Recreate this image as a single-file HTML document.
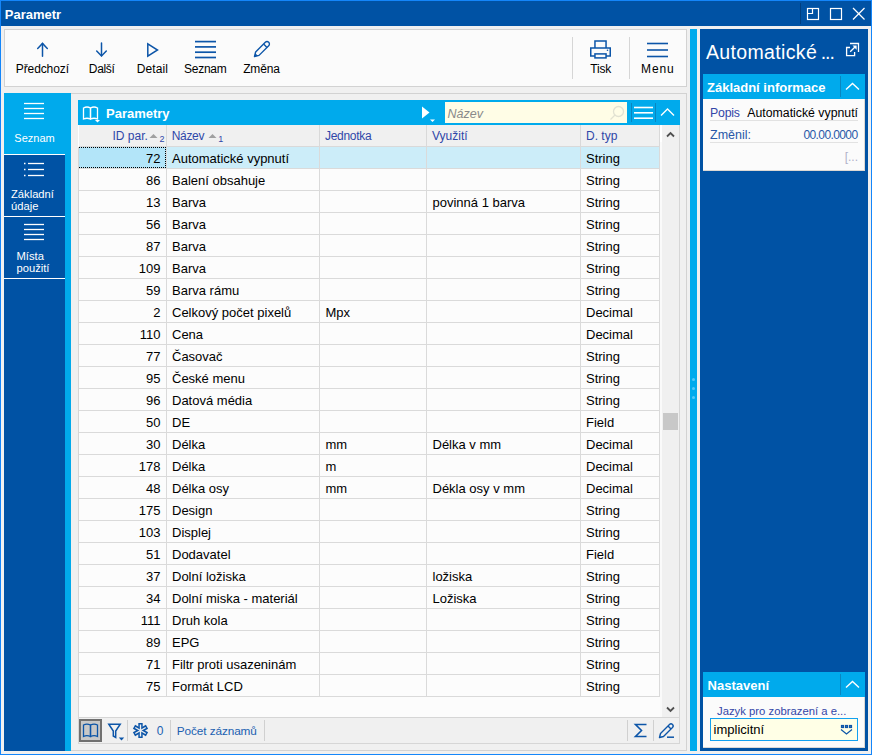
<!DOCTYPE html>
<html><head><meta charset="utf-8"><title>Parametr</title>
<style>
html,body{margin:0;padding:0;width:872px;height:755px;overflow:hidden;background:#f0f0f0;font-family:"Liberation Sans", sans-serif;}
div{font-family:"Liberation Sans", sans-serif;}
</style></head><body>
<div style="position:absolute;left:0px;top:0px;width:872px;height:755px;background:#f0f0f0"></div><div style="position:absolute;left:1px;top:1px;width:870px;height:25px;background:#0052a4"></div><svg style="position:absolute;left:800px;top:3px" width="72" height="22" viewBox="0 0 72 22"><line x1="0.5" y1="0" x2="0.5" y2="21" stroke="#003f80" stroke-width="1"/><g fill="none" stroke="#fff" stroke-width="1.2"><rect x="7.5" y="5.5" width="11" height="11"/><polyline points="12.5,5.5 12.5,10.5 7.5,10.5"/><rect x="30.5" y="5.5" width="11" height="11"/><line x1="53" y1="5" x2="64.5" y2="16.5"/><line x1="64.5" y1="5" x2="53" y2="16.5"/></g></svg><div style="position:absolute;left:0px;top:0px;width:872px;height:1px;background:#1486fa"></div><div style="position:absolute;left:0px;top:0px;width:1px;height:755px;background:#1486fa"></div><div style="position:absolute;left:871px;top:0px;width:1px;height:755px;background:#1486fa"></div><div style="position:absolute;left:0px;top:754px;width:872px;height:1px;background:#1486fa"></div><div style="position:absolute;left:4px;top:29px;width:683px;height:58px;background:#fbfbfb;border:1px solid #d2d2d2;box-sizing:border-box"></div><svg style="position:absolute;left:36px;top:41px" width="13" height="17" viewBox="0 0 13 17"><g fill="none" stroke="#0c55a8" stroke-width="1.5" stroke-linecap="round" stroke-linejoin="miter"><line x1="6.5" y1="2.5" x2="6.5" y2="15.2"/><polyline points="1.7,7.4 6.5,2.4 11.3,7.4"/></g></svg><svg style="position:absolute;left:95px;top:41px" width="13" height="17" viewBox="0 0 13 17"><g fill="none" stroke="#0c55a8" stroke-width="1.5" stroke-linecap="round" stroke-linejoin="miter"><line x1="6.5" y1="1.9" x2="6.5" y2="14.8"/><polyline points="1.7,10 6.5,14.9 11.3,10"/></g></svg><svg style="position:absolute;left:146px;top:42px" width="13" height="16" viewBox="0 0 13 16"><polygon points="1.8,1.8 1.8,14.2 11.5,8" fill="none" stroke="#0c55a8" stroke-width="1.5" stroke-linejoin="miter"/></svg><svg style="position:absolute;left:194px;top:40px" width="23" height="19" viewBox="0 0 23 19"><g stroke="#0c55a8" stroke-width="1.7"><line x1="1" y1="1.6" x2="22" y2="1.6"/><line x1="1" y1="6.9" x2="22" y2="6.9"/><line x1="1" y1="12.2" x2="22" y2="12.2"/><line x1="1" y1="17.5" x2="22" y2="17.5"/></g></svg><svg style="position:absolute;left:252px;top:40px" width="20" height="19" viewBox="0 0 20 19"><g fill="none" stroke="#0c55a8" stroke-width="1.4" stroke-linejoin="round"><path d="M2.5,16.5 L3.63,11.97 L13.3,2.3 A2.4,2.4 0 0 1 16.7,5.7 L7.03,15.37 Z"/><line x1="11.6" y1="4.0" x2="15" y2="7.4"/></g><polygon points="2.5,16.5 3.3,13.2 5.8,15.7" fill="#0c55a8"/></svg><div style="position:absolute;left:572px;top:37px;width:1px;height:42px;background:#d6d6d6"></div><svg style="position:absolute;left:589px;top:39px" width="24" height="21" viewBox="0 0 24 21"><g fill="none" stroke="#0c55a8" stroke-width="1.5"><path d="M5.95,9 V2.1 H17.05 V9"/><path d="M5.95,17 H1.75 V9 H21.25 V17 H17.05"/><rect x="5.95" y="14.9" width="11.1" height="4"/></g><circle cx="18.5" cy="11.3" r="0.8" fill="#0c55a8"/></svg><div style="position:absolute;left:629px;top:37px;width:1px;height:42px;background:#d6d6d6"></div><svg style="position:absolute;left:646px;top:42px" width="23" height="16" viewBox="0 0 23 16"><g stroke="#0c55a8" stroke-width="1.6"><line x1="1" y1="1.5" x2="22" y2="1.5"/><line x1="1" y1="8" x2="22" y2="8"/><line x1="1" y1="14.5" x2="22" y2="14.5"/></g></svg><div style="position:absolute;left:71px;top:93px;width:616px;height:658px;background:#f0f0f0;border-top:1px solid #d2d2d2;border-right:1px solid #d2d2d2;border-bottom:1px solid #d2d2d2;box-sizing:border-box"></div><div style="position:absolute;left:4px;top:93px;width:67px;height:658px;background:#00aaec"></div><div style="position:absolute;left:4px;top:154px;width:61px;height:597px;background:#0052a4"></div><div style="position:absolute;left:4px;top:154px;width:61px;height:1px;background:#ffffff"></div><div style="position:absolute;left:4px;top:216px;width:61px;height:1px;background:#ffffff"></div><div style="position:absolute;left:4px;top:278px;width:61px;height:1px;background:#ffffff"></div><svg style="position:absolute;left:23px;top:102px" width="22" height="18" viewBox="0 0 22 18"><g stroke="#fff" stroke-width="1.3"><line x1="1" y1="1.5" x2="21" y2="1.5"/><line x1="1" y1="6.5" x2="21" y2="6.5"/><line x1="1" y1="11.5" x2="21" y2="11.5"/><line x1="1" y1="16.5" x2="21" y2="16.5"/></g></svg><svg style="position:absolute;left:23px;top:162px" width="22" height="16" viewBox="0 0 22 16"><g stroke="#fff" stroke-width="1.3"><line x1="5" y1="1.5" x2="21" y2="1.5"/><line x1="5" y1="7.5" x2="21" y2="7.5"/><line x1="5" y1="13.5" x2="21" y2="13.5"/><line x1="1" y1="1.5" x2="2.5" y2="1.5"/><line x1="1" y1="7.5" x2="2.5" y2="7.5"/><line x1="1" y1="13.5" x2="2.5" y2="13.5"/></g></svg><svg style="position:absolute;left:23px;top:223px" width="22" height="18" viewBox="0 0 22 18"><g stroke="#fff" stroke-width="1.3"><line x1="1" y1="1.5" x2="21" y2="1.5"/><line x1="1" y1="6.5" x2="21" y2="6.5"/><line x1="1" y1="11.5" x2="21" y2="11.5"/><line x1="1" y1="16.5" x2="21" y2="16.5"/></g></svg><div style="position:absolute;left:78px;top:100px;width:602px;height:25px;background:#00aaec"></div><svg style="position:absolute;left:82px;top:105px" width="20" height="18" viewBox="0 0 20 18"><g fill="none" stroke="#fff" stroke-width="1.3"><path d="M1.5,3 Q5,1 8.5,3 V14 Q5,12.5 1.5,14 Z"/><path d="M8.5,3 Q12,1 15.5,3 V14 Q12,12.5 8.5,14 Z"/></g><polygon points="13,15 18,15 15.5,17.5" fill="#fff"/></svg><svg style="position:absolute;left:420px;top:105px" width="18" height="19" viewBox="0 0 18 19"><polygon points="2,1.5 2,13.5 9.5,7.5" fill="#fff"/><polygon points="10,14.5 15,14.5 12.5,17" fill="#fff"/></svg><div style="position:absolute;left:445px;top:102px;width:182px;height:21px;background:#fffde6"></div><svg style="position:absolute;left:609px;top:105px" width="16" height="16" viewBox="0 0 16 16"><g fill="none" stroke="#e2e2d2" stroke-width="1.3"><circle cx="9.5" cy="6.5" r="5"/><line x1="6" y1="10" x2="1.5" y2="14.5"/></g></svg><div style="position:absolute;left:631px;top:103px;width:1px;height:19px;background:#0a86c0"></div><svg style="position:absolute;left:633px;top:106px" width="22" height="14" viewBox="0 0 22 14"><g stroke="#fff" stroke-width="1.6"><line x1="1" y1="1.5" x2="20" y2="1.5"/><line x1="1" y1="6.8" x2="20" y2="6.8"/><line x1="1" y1="12.2" x2="20" y2="12.2"/></g></svg><div style="position:absolute;left:655px;top:103px;width:1px;height:19px;background:#0a86c0"></div><svg style="position:absolute;left:659px;top:107px" width="18" height="11" viewBox="0 0 18 11"><polyline points="2,8.5 8.5,2 15,8.5" fill="none" stroke="#fff" stroke-width="1.4"/></svg><div style="position:absolute;left:78px;top:125px;width:602px;height:22px;background:#f0f0f0"></div><div style="position:absolute;left:78px;top:146px;width:581px;height:1px;background:#d9d9d9"></div><div style="position:absolute;left:166px;top:125px;width:1px;height:22px;background:#d9d9d9"></div><div style="position:absolute;left:319px;top:125px;width:1px;height:22px;background:#d9d9d9"></div><div style="position:absolute;left:426px;top:125px;width:1px;height:22px;background:#d9d9d9"></div><div style="position:absolute;left:580px;top:125px;width:1px;height:22px;background:#d9d9d9"></div><div style="position:absolute;left:659px;top:125px;width:1px;height:22px;background:#d9d9d9"></div><div style="position:absolute;left:78px;top:125px;width:1px;height:22px;background:#fff"></div><svg style="position:absolute;left:149px;top:133px" width="9" height="6" viewBox="0 0 9 6"><polygon points="0.5,5 4.5,1 8.5,5" fill="#a0a0a0"/></svg><svg style="position:absolute;left:207.5px;top:133px" width="9" height="6" viewBox="0 0 9 6"><polygon points="0.5,5 4.5,1 8.5,5" fill="#a0a0a0"/></svg><svg style="position:absolute;left:665px;top:130px" width="11" height="9" viewBox="0 0 11 9"><polyline points="2,6.5 5.5,3 9,6.5" fill="none" stroke="#505050" stroke-width="1.8"/></svg><div style="position:absolute;left:78px;top:147px;width:584px;height:570px;background:#fcfcfc"></div><div style="position:absolute;left:78px;top:147px;width:88px;height:21px;background:#b3e5f9"></div><div style="position:absolute;left:167px;top:147px;width:492px;height:21px;background:#ccedf9"></div><div style="position:absolute;left:78px;top:147px;width:88px;height:21px;border:1px dotted #000;box-sizing:border-box"></div><div style="position:absolute;left:78px;top:168px;width:581px;height:1px;background:#dadada"></div><div style="position:absolute;left:166px;top:147px;width:1px;height:22px;background:#dadada"></div><div style="position:absolute;left:319px;top:147px;width:1px;height:22px;background:#dadada"></div><div style="position:absolute;left:426px;top:147px;width:1px;height:22px;background:#dadada"></div><div style="position:absolute;left:580px;top:147px;width:1px;height:22px;background:#dadada"></div><div style="position:absolute;left:659px;top:147px;width:1px;height:22px;background:#dadada"></div><div style="position:absolute;left:78px;top:190px;width:581px;height:1px;background:#dadada"></div><div style="position:absolute;left:166px;top:169px;width:1px;height:22px;background:#dadada"></div><div style="position:absolute;left:319px;top:169px;width:1px;height:22px;background:#dadada"></div><div style="position:absolute;left:426px;top:169px;width:1px;height:22px;background:#dadada"></div><div style="position:absolute;left:580px;top:169px;width:1px;height:22px;background:#dadada"></div><div style="position:absolute;left:659px;top:169px;width:1px;height:22px;background:#dadada"></div><div style="position:absolute;left:78px;top:212px;width:581px;height:1px;background:#dadada"></div><div style="position:absolute;left:166px;top:191px;width:1px;height:22px;background:#dadada"></div><div style="position:absolute;left:319px;top:191px;width:1px;height:22px;background:#dadada"></div><div style="position:absolute;left:426px;top:191px;width:1px;height:22px;background:#dadada"></div><div style="position:absolute;left:580px;top:191px;width:1px;height:22px;background:#dadada"></div><div style="position:absolute;left:659px;top:191px;width:1px;height:22px;background:#dadada"></div><div style="position:absolute;left:78px;top:234px;width:581px;height:1px;background:#dadada"></div><div style="position:absolute;left:166px;top:213px;width:1px;height:22px;background:#dadada"></div><div style="position:absolute;left:319px;top:213px;width:1px;height:22px;background:#dadada"></div><div style="position:absolute;left:426px;top:213px;width:1px;height:22px;background:#dadada"></div><div style="position:absolute;left:580px;top:213px;width:1px;height:22px;background:#dadada"></div><div style="position:absolute;left:659px;top:213px;width:1px;height:22px;background:#dadada"></div><div style="position:absolute;left:78px;top:256px;width:581px;height:1px;background:#dadada"></div><div style="position:absolute;left:166px;top:235px;width:1px;height:22px;background:#dadada"></div><div style="position:absolute;left:319px;top:235px;width:1px;height:22px;background:#dadada"></div><div style="position:absolute;left:426px;top:235px;width:1px;height:22px;background:#dadada"></div><div style="position:absolute;left:580px;top:235px;width:1px;height:22px;background:#dadada"></div><div style="position:absolute;left:659px;top:235px;width:1px;height:22px;background:#dadada"></div><div style="position:absolute;left:78px;top:278px;width:581px;height:1px;background:#dadada"></div><div style="position:absolute;left:166px;top:257px;width:1px;height:22px;background:#dadada"></div><div style="position:absolute;left:319px;top:257px;width:1px;height:22px;background:#dadada"></div><div style="position:absolute;left:426px;top:257px;width:1px;height:22px;background:#dadada"></div><div style="position:absolute;left:580px;top:257px;width:1px;height:22px;background:#dadada"></div><div style="position:absolute;left:659px;top:257px;width:1px;height:22px;background:#dadada"></div><div style="position:absolute;left:78px;top:300px;width:581px;height:1px;background:#dadada"></div><div style="position:absolute;left:166px;top:279px;width:1px;height:22px;background:#dadada"></div><div style="position:absolute;left:319px;top:279px;width:1px;height:22px;background:#dadada"></div><div style="position:absolute;left:426px;top:279px;width:1px;height:22px;background:#dadada"></div><div style="position:absolute;left:580px;top:279px;width:1px;height:22px;background:#dadada"></div><div style="position:absolute;left:659px;top:279px;width:1px;height:22px;background:#dadada"></div><div style="position:absolute;left:78px;top:322px;width:581px;height:1px;background:#dadada"></div><div style="position:absolute;left:166px;top:301px;width:1px;height:22px;background:#dadada"></div><div style="position:absolute;left:319px;top:301px;width:1px;height:22px;background:#dadada"></div><div style="position:absolute;left:426px;top:301px;width:1px;height:22px;background:#dadada"></div><div style="position:absolute;left:580px;top:301px;width:1px;height:22px;background:#dadada"></div><div style="position:absolute;left:659px;top:301px;width:1px;height:22px;background:#dadada"></div><div style="position:absolute;left:78px;top:344px;width:581px;height:1px;background:#dadada"></div><div style="position:absolute;left:166px;top:323px;width:1px;height:22px;background:#dadada"></div><div style="position:absolute;left:319px;top:323px;width:1px;height:22px;background:#dadada"></div><div style="position:absolute;left:426px;top:323px;width:1px;height:22px;background:#dadada"></div><div style="position:absolute;left:580px;top:323px;width:1px;height:22px;background:#dadada"></div><div style="position:absolute;left:659px;top:323px;width:1px;height:22px;background:#dadada"></div><div style="position:absolute;left:78px;top:366px;width:581px;height:1px;background:#dadada"></div><div style="position:absolute;left:166px;top:345px;width:1px;height:22px;background:#dadada"></div><div style="position:absolute;left:319px;top:345px;width:1px;height:22px;background:#dadada"></div><div style="position:absolute;left:426px;top:345px;width:1px;height:22px;background:#dadada"></div><div style="position:absolute;left:580px;top:345px;width:1px;height:22px;background:#dadada"></div><div style="position:absolute;left:659px;top:345px;width:1px;height:22px;background:#dadada"></div><div style="position:absolute;left:78px;top:388px;width:581px;height:1px;background:#dadada"></div><div style="position:absolute;left:166px;top:367px;width:1px;height:22px;background:#dadada"></div><div style="position:absolute;left:319px;top:367px;width:1px;height:22px;background:#dadada"></div><div style="position:absolute;left:426px;top:367px;width:1px;height:22px;background:#dadada"></div><div style="position:absolute;left:580px;top:367px;width:1px;height:22px;background:#dadada"></div><div style="position:absolute;left:659px;top:367px;width:1px;height:22px;background:#dadada"></div><div style="position:absolute;left:78px;top:410px;width:581px;height:1px;background:#dadada"></div><div style="position:absolute;left:166px;top:389px;width:1px;height:22px;background:#dadada"></div><div style="position:absolute;left:319px;top:389px;width:1px;height:22px;background:#dadada"></div><div style="position:absolute;left:426px;top:389px;width:1px;height:22px;background:#dadada"></div><div style="position:absolute;left:580px;top:389px;width:1px;height:22px;background:#dadada"></div><div style="position:absolute;left:659px;top:389px;width:1px;height:22px;background:#dadada"></div><div style="position:absolute;left:78px;top:432px;width:581px;height:1px;background:#dadada"></div><div style="position:absolute;left:166px;top:411px;width:1px;height:22px;background:#dadada"></div><div style="position:absolute;left:319px;top:411px;width:1px;height:22px;background:#dadada"></div><div style="position:absolute;left:426px;top:411px;width:1px;height:22px;background:#dadada"></div><div style="position:absolute;left:580px;top:411px;width:1px;height:22px;background:#dadada"></div><div style="position:absolute;left:659px;top:411px;width:1px;height:22px;background:#dadada"></div><div style="position:absolute;left:78px;top:454px;width:581px;height:1px;background:#dadada"></div><div style="position:absolute;left:166px;top:433px;width:1px;height:22px;background:#dadada"></div><div style="position:absolute;left:319px;top:433px;width:1px;height:22px;background:#dadada"></div><div style="position:absolute;left:426px;top:433px;width:1px;height:22px;background:#dadada"></div><div style="position:absolute;left:580px;top:433px;width:1px;height:22px;background:#dadada"></div><div style="position:absolute;left:659px;top:433px;width:1px;height:22px;background:#dadada"></div><div style="position:absolute;left:78px;top:476px;width:581px;height:1px;background:#dadada"></div><div style="position:absolute;left:166px;top:455px;width:1px;height:22px;background:#dadada"></div><div style="position:absolute;left:319px;top:455px;width:1px;height:22px;background:#dadada"></div><div style="position:absolute;left:426px;top:455px;width:1px;height:22px;background:#dadada"></div><div style="position:absolute;left:580px;top:455px;width:1px;height:22px;background:#dadada"></div><div style="position:absolute;left:659px;top:455px;width:1px;height:22px;background:#dadada"></div><div style="position:absolute;left:78px;top:498px;width:581px;height:1px;background:#dadada"></div><div style="position:absolute;left:166px;top:477px;width:1px;height:22px;background:#dadada"></div><div style="position:absolute;left:319px;top:477px;width:1px;height:22px;background:#dadada"></div><div style="position:absolute;left:426px;top:477px;width:1px;height:22px;background:#dadada"></div><div style="position:absolute;left:580px;top:477px;width:1px;height:22px;background:#dadada"></div><div style="position:absolute;left:659px;top:477px;width:1px;height:22px;background:#dadada"></div><div style="position:absolute;left:78px;top:520px;width:581px;height:1px;background:#dadada"></div><div style="position:absolute;left:166px;top:499px;width:1px;height:22px;background:#dadada"></div><div style="position:absolute;left:319px;top:499px;width:1px;height:22px;background:#dadada"></div><div style="position:absolute;left:426px;top:499px;width:1px;height:22px;background:#dadada"></div><div style="position:absolute;left:580px;top:499px;width:1px;height:22px;background:#dadada"></div><div style="position:absolute;left:659px;top:499px;width:1px;height:22px;background:#dadada"></div><div style="position:absolute;left:78px;top:542px;width:581px;height:1px;background:#dadada"></div><div style="position:absolute;left:166px;top:521px;width:1px;height:22px;background:#dadada"></div><div style="position:absolute;left:319px;top:521px;width:1px;height:22px;background:#dadada"></div><div style="position:absolute;left:426px;top:521px;width:1px;height:22px;background:#dadada"></div><div style="position:absolute;left:580px;top:521px;width:1px;height:22px;background:#dadada"></div><div style="position:absolute;left:659px;top:521px;width:1px;height:22px;background:#dadada"></div><div style="position:absolute;left:78px;top:564px;width:581px;height:1px;background:#dadada"></div><div style="position:absolute;left:166px;top:543px;width:1px;height:22px;background:#dadada"></div><div style="position:absolute;left:319px;top:543px;width:1px;height:22px;background:#dadada"></div><div style="position:absolute;left:426px;top:543px;width:1px;height:22px;background:#dadada"></div><div style="position:absolute;left:580px;top:543px;width:1px;height:22px;background:#dadada"></div><div style="position:absolute;left:659px;top:543px;width:1px;height:22px;background:#dadada"></div><div style="position:absolute;left:78px;top:586px;width:581px;height:1px;background:#dadada"></div><div style="position:absolute;left:166px;top:565px;width:1px;height:22px;background:#dadada"></div><div style="position:absolute;left:319px;top:565px;width:1px;height:22px;background:#dadada"></div><div style="position:absolute;left:426px;top:565px;width:1px;height:22px;background:#dadada"></div><div style="position:absolute;left:580px;top:565px;width:1px;height:22px;background:#dadada"></div><div style="position:absolute;left:659px;top:565px;width:1px;height:22px;background:#dadada"></div><div style="position:absolute;left:78px;top:608px;width:581px;height:1px;background:#dadada"></div><div style="position:absolute;left:166px;top:587px;width:1px;height:22px;background:#dadada"></div><div style="position:absolute;left:319px;top:587px;width:1px;height:22px;background:#dadada"></div><div style="position:absolute;left:426px;top:587px;width:1px;height:22px;background:#dadada"></div><div style="position:absolute;left:580px;top:587px;width:1px;height:22px;background:#dadada"></div><div style="position:absolute;left:659px;top:587px;width:1px;height:22px;background:#dadada"></div><div style="position:absolute;left:78px;top:630px;width:581px;height:1px;background:#dadada"></div><div style="position:absolute;left:166px;top:609px;width:1px;height:22px;background:#dadada"></div><div style="position:absolute;left:319px;top:609px;width:1px;height:22px;background:#dadada"></div><div style="position:absolute;left:426px;top:609px;width:1px;height:22px;background:#dadada"></div><div style="position:absolute;left:580px;top:609px;width:1px;height:22px;background:#dadada"></div><div style="position:absolute;left:659px;top:609px;width:1px;height:22px;background:#dadada"></div><div style="position:absolute;left:78px;top:652px;width:581px;height:1px;background:#dadada"></div><div style="position:absolute;left:166px;top:631px;width:1px;height:22px;background:#dadada"></div><div style="position:absolute;left:319px;top:631px;width:1px;height:22px;background:#dadada"></div><div style="position:absolute;left:426px;top:631px;width:1px;height:22px;background:#dadada"></div><div style="position:absolute;left:580px;top:631px;width:1px;height:22px;background:#dadada"></div><div style="position:absolute;left:659px;top:631px;width:1px;height:22px;background:#dadada"></div><div style="position:absolute;left:78px;top:674px;width:581px;height:1px;background:#dadada"></div><div style="position:absolute;left:166px;top:653px;width:1px;height:22px;background:#dadada"></div><div style="position:absolute;left:319px;top:653px;width:1px;height:22px;background:#dadada"></div><div style="position:absolute;left:426px;top:653px;width:1px;height:22px;background:#dadada"></div><div style="position:absolute;left:580px;top:653px;width:1px;height:22px;background:#dadada"></div><div style="position:absolute;left:659px;top:653px;width:1px;height:22px;background:#dadada"></div><div style="position:absolute;left:78px;top:696px;width:581px;height:1px;background:#dadada"></div><div style="position:absolute;left:166px;top:675px;width:1px;height:22px;background:#dadada"></div><div style="position:absolute;left:319px;top:675px;width:1px;height:22px;background:#dadada"></div><div style="position:absolute;left:426px;top:675px;width:1px;height:22px;background:#dadada"></div><div style="position:absolute;left:580px;top:675px;width:1px;height:22px;background:#dadada"></div><div style="position:absolute;left:659px;top:675px;width:1px;height:22px;background:#dadada"></div><div style="position:absolute;left:660px;top:125px;width:2px;height:17px;background:#ffffff"></div><div style="position:absolute;left:660px;top:142px;width:2px;height:575px;background:#fafafa"></div><div style="position:absolute;left:662px;top:147px;width:17px;height:570px;background:#f0f0f0"></div><div style="position:absolute;left:679px;top:125px;width:1px;height:618px;background:#d6d6d6"></div><div style="position:absolute;left:663px;top:413px;width:15px;height:17px;background:#c8c8c8"></div><svg style="position:absolute;left:665px;top:705px" width="11" height="9" viewBox="0 0 11 9"><polyline points="2,2.5 5.5,6 9,2.5" fill="none" stroke="#505050" stroke-width="1.8"/></svg><div style="position:absolute;left:78px;top:717px;width:602px;height:1px;background:#d6d6d6"></div><div style="position:absolute;left:78px;top:743px;width:602px;height:1px;background:#d6d6d6"></div><div style="position:absolute;left:78px;top:147px;width:1px;height:596px;background:#d6d6d6"></div><div style="position:absolute;left:79px;top:719px;width:23px;height:23px;background:#c8c8c8;border:2px solid #707070;box-sizing:border-box"></div><svg style="position:absolute;left:82px;top:722px" width="18" height="17" viewBox="0 0 18 17"><g fill="none" stroke="#0c55a8" stroke-width="1.3"><path d="M1.5,3 Q4.8,1.2 8.5,3 V14.5 Q4.8,12.8 1.5,14.5 Z"/><path d="M8.5,3 Q12.2,1.2 15.5,3 V14.5 Q12.2,12.8 8.5,14.5 Z"/></g></svg><svg style="position:absolute;left:106px;top:721px" width="20" height="21" viewBox="0 0 20 21"><path d="M2.8,3.2 H14.2 L9.7,10 V16.5 L7.3,15 V10 Z" fill="none" stroke="#0c55a8" stroke-width="1.5" stroke-linejoin="miter"/><polygon points="12.8,16.5 18.2,16.5 15.5,19.5" fill="#0c55a8"/></svg><div style="position:absolute;left:127px;top:720px;width:1px;height:21px;background:#d0d0d0"></div><svg style="position:absolute;left:131px;top:721px" width="19" height="19" viewBox="0 0 19 19"><g stroke="#0c55a8" stroke-width="4.4" stroke-linecap="butt"><line x1="9.5" y1="2" x2="9.5" y2="17"/><line x1="3" y1="5.75" x2="16" y2="13.25"/><line x1="3" y1="13.25" x2="16" y2="5.75"/></g><g stroke="#f0f0f0" stroke-width="1.4"><line x1="9.5" y1="3.5" x2="9.5" y2="15.5"/><line x1="4.3" y1="6.5" x2="14.7" y2="12.5"/><line x1="4.3" y1="12.5" x2="14.7" y2="6.5"/></g></svg><div style="position:absolute;left:170px;top:720px;width:1px;height:21px;background:#d0d0d0"></div><div style="position:absolute;left:264px;top:720px;width:1px;height:21px;background:#d0d0d0"></div><div style="position:absolute;left:627px;top:720px;width:1px;height:21px;background:#d0d0d0"></div><svg style="position:absolute;left:633px;top:722px" width="16" height="17" viewBox="0 0 16 17"><polyline points="13.5,2.5 2.5,2.5 8.5,8.5 2.5,14.5 13.5,14.5" fill="none" stroke="#0c55a8" stroke-width="1.6" stroke-linejoin="miter"/></svg><div style="position:absolute;left:653px;top:720px;width:1px;height:21px;background:#d0d0d0"></div><svg style="position:absolute;left:658px;top:722px" width="18" height="17" viewBox="0 0 18 17"><g fill="none" stroke="#0c55a8" stroke-width="1.4" stroke-linejoin="round"><path d="M2.5,11.5 L11.5,2.5 Q13,1 14.5,2.5 Q16,4 14.5,5.5 L5.5,14.5 L1.5,15.5 Z"/><line x1="10" y1="4" x2="13" y2="7"/></g><line x1="9" y1="15.2" x2="16" y2="15.2" stroke="#0c55a8" stroke-width="1.5"/></svg><div style="position:absolute;left:690px;top:29px;width:7px;height:722px;background:#00aaec"></div><div style="position:absolute;left:692px;top:378px;width:3px;height:3px;border-radius:50%;background:#55c8f8"></div><div style="position:absolute;left:692px;top:387px;width:3px;height:3px;border-radius:50%;background:#55c8f8"></div><div style="position:absolute;left:692px;top:396px;width:3px;height:3px;border-radius:50%;background:#55c8f8"></div><div style="position:absolute;left:700px;top:29px;width:168px;height:722px;background:#0052a4"></div><svg style="position:absolute;left:845px;top:42px" width="16" height="16" viewBox="0 0 16 16"><g fill="none" stroke="#fff" stroke-width="1.3"><path d="M5,1.5 H13.5 V10"/><path d="M5,5.5 H1.6 V13.6 H9.6 V10"/><line x1="5.2" y1="9.8" x2="10.5" y2="4.5"/></g><polygon points="7.5,3.6 11.6,3.6 11.6,7.7" fill="#fff"/></svg><div style="position:absolute;left:703px;top:74px;width:162px;height:25px;background:#00aaec"></div><div style="position:absolute;left:840px;top:76px;width:1px;height:21px;background:#0a86c0"></div><svg style="position:absolute;left:844px;top:81px" width="17" height="11" viewBox="0 0 17 11"><polyline points="2,8.5 8.5,2.5 15,8.5" fill="none" stroke="#fff" stroke-width="1.4"/></svg><div style="position:absolute;left:703px;top:99px;width:162px;height:72px;background:#fbfbfb;border-right:1px solid #dcd8d4;border-bottom:1px solid #dcd8d4;box-sizing:border-box"></div><div style="position:absolute;left:710px;top:120px;width:148px;height:1px;background:#e2e2e2"></div><div style="position:absolute;left:710px;top:142px;width:148px;height:1px;background:#e2e2e2"></div><div style="position:absolute;left:703px;top:672px;width:162px;height:25px;background:#00aaec"></div><div style="position:absolute;left:840px;top:674px;width:1px;height:21px;background:#0a86c0"></div><svg style="position:absolute;left:844px;top:679px" width="17" height="11" viewBox="0 0 17 11"><polyline points="2,8.5 8.5,2.5 15,8.5" fill="none" stroke="#fff" stroke-width="1.4"/></svg><div style="position:absolute;left:703px;top:697px;width:162px;height:51px;background:#fbfbfb;border-right:1px solid #dcd8d4;border-bottom:1px solid #dcd8d4;box-sizing:border-box"></div><div style="position:absolute;left:710px;top:718px;width:148px;height:23px;background:#ffffe6;border:1px solid #12a0f0;box-sizing:border-box"></div><svg style="position:absolute;left:839px;top:723px" width="15" height="13" viewBox="0 0 15 13"><g fill="none" stroke="#0c55a8" stroke-width="1.2"><rect x="2.5" y="2.5" width="2" height="2"/><rect x="6.5" y="2.5" width="2" height="2"/><rect x="10.5" y="2.5" width="2" height="2"/><polyline points="2,6.5 7.5,11 13,6.5"/></g></svg>
<svg style="position:absolute;left:0;top:0" width="872" height="755" font-family='"Liberation Sans", sans-serif'><text x="4.8" y="19" font-size="13" fill="#fff" text-anchor="start" font-weight="bold">Parametr</text><text x="42.35" y="73.2" font-size="12" fill="#000" text-anchor="middle" letter-spacing="-0.1">Předchozí</text><text x="101.615" y="73.2" font-size="12" fill="#000" text-anchor="middle" letter-spacing="-0.37">Další</text><text x="152.35000000000002" y="73.2" font-size="12" fill="#000" text-anchor="middle" letter-spacing="0.1">Detail</text><text x="205.27" y="73.2" font-size="12" fill="#000" text-anchor="middle" letter-spacing="-0.26">Seznam</text><text x="261.415" y="73.2" font-size="12" fill="#000" text-anchor="middle" letter-spacing="-0.17">Změna</text><text x="600.7149999999999" y="73.2" font-size="12" fill="#000" text-anchor="middle" letter-spacing="-0.17">Tisk</text><text x="657.85" y="73.2" font-size="12" fill="#000" text-anchor="middle" letter-spacing="0.9">Menu</text><text x="34.5" y="141.6" font-size="11" fill="#fff" text-anchor="middle">Seznam</text><text x="11" y="197.9" font-size="11.2" fill="#fff" text-anchor="start">Základní</text><text x="11" y="210.3" font-size="11.2" fill="#fff" text-anchor="start">údaje</text><text x="16.5" y="259.8" font-size="11.2" fill="#fff" text-anchor="start">Místa</text><text x="16.5" y="272.4" font-size="11.2" fill="#fff" text-anchor="start">použití</text><text x="106" y="118.2" font-size="13" fill="#fff" text-anchor="start" font-weight="bold">Parametry</text><text x="447.5" y="117.7" font-size="12.5" fill="#8a8a8a" text-anchor="start" font-style="italic">Název</text><text x="112.5" y="140" font-size="12" fill="#2f47a8" text-anchor="start">ID par.</text><text x="159.5" y="142" font-size="9" fill="#2f47a8" text-anchor="start">2</text><text x="171.8" y="140" font-size="12" fill="#2f47a8" text-anchor="start" letter-spacing="-0.35">Název</text><text x="218.3" y="142" font-size="9" fill="#2f47a8" text-anchor="start">1</text><text x="325" y="140" font-size="12" fill="#2f47a8" text-anchor="start" letter-spacing="-0.3">Jednotka</text><text x="432" y="140" font-size="12" fill="#2f47a8" text-anchor="start">Využití</text><text x="586" y="140" font-size="12" fill="#2f47a8" text-anchor="start">D. typ</text><text x="160.5" y="163.2" font-size="13" fill="#000" text-anchor="end">72</text><text x="172" y="163.2" font-size="13" fill="#000" text-anchor="start">Automatické vypnutí</text><text x="586" y="163.2" font-size="13" fill="#000" text-anchor="start">String</text><text x="160.5" y="185.2" font-size="13" fill="#000" text-anchor="end">86</text><text x="172" y="185.2" font-size="13" fill="#000" text-anchor="start">Balení obsahuje</text><text x="586" y="185.2" font-size="13" fill="#000" text-anchor="start">String</text><text x="160.5" y="207.2" font-size="13" fill="#000" text-anchor="end">13</text><text x="172" y="207.2" font-size="13" fill="#000" text-anchor="start">Barva</text><text x="432.5" y="207.2" font-size="13" fill="#000" text-anchor="start">povinná 1 barva</text><text x="586" y="207.2" font-size="13" fill="#000" text-anchor="start">String</text><text x="160.5" y="229.2" font-size="13" fill="#000" text-anchor="end">56</text><text x="172" y="229.2" font-size="13" fill="#000" text-anchor="start">Barva</text><text x="586" y="229.2" font-size="13" fill="#000" text-anchor="start">String</text><text x="160.5" y="251.2" font-size="13" fill="#000" text-anchor="end">87</text><text x="172" y="251.2" font-size="13" fill="#000" text-anchor="start">Barva</text><text x="586" y="251.2" font-size="13" fill="#000" text-anchor="start">String</text><text x="160.5" y="273.2" font-size="13" fill="#000" text-anchor="end">109</text><text x="172" y="273.2" font-size="13" fill="#000" text-anchor="start">Barva</text><text x="586" y="273.2" font-size="13" fill="#000" text-anchor="start">String</text><text x="160.5" y="295.2" font-size="13" fill="#000" text-anchor="end">59</text><text x="172" y="295.2" font-size="13" fill="#000" text-anchor="start">Barva rámu</text><text x="586" y="295.2" font-size="13" fill="#000" text-anchor="start">String</text><text x="160.5" y="317.2" font-size="13" fill="#000" text-anchor="end">2</text><text x="172" y="317.2" font-size="13" fill="#000" text-anchor="start">Celkový počet pixelů</text><text x="325.5" y="317.2" font-size="13" fill="#000" text-anchor="start">Mpx</text><text x="586" y="317.2" font-size="13" fill="#000" text-anchor="start">Decimal</text><text x="160.5" y="339.2" font-size="13" fill="#000" text-anchor="end">110</text><text x="172" y="339.2" font-size="13" fill="#000" text-anchor="start">Cena</text><text x="586" y="339.2" font-size="13" fill="#000" text-anchor="start">Decimal</text><text x="160.5" y="361.2" font-size="13" fill="#000" text-anchor="end">77</text><text x="172" y="361.2" font-size="13" fill="#000" text-anchor="start">Časovač</text><text x="586" y="361.2" font-size="13" fill="#000" text-anchor="start">String</text><text x="160.5" y="383.2" font-size="13" fill="#000" text-anchor="end">95</text><text x="172" y="383.2" font-size="13" fill="#000" text-anchor="start">České menu</text><text x="586" y="383.2" font-size="13" fill="#000" text-anchor="start">String</text><text x="160.5" y="405.2" font-size="13" fill="#000" text-anchor="end">96</text><text x="172" y="405.2" font-size="13" fill="#000" text-anchor="start">Datová média</text><text x="586" y="405.2" font-size="13" fill="#000" text-anchor="start">String</text><text x="160.5" y="427.2" font-size="13" fill="#000" text-anchor="end">50</text><text x="172" y="427.2" font-size="13" fill="#000" text-anchor="start">DE</text><text x="586" y="427.2" font-size="13" fill="#000" text-anchor="start">Field</text><text x="160.5" y="449.2" font-size="13" fill="#000" text-anchor="end">30</text><text x="172" y="449.2" font-size="13" fill="#000" text-anchor="start">Délka</text><text x="325.5" y="449.2" font-size="13" fill="#000" text-anchor="start">mm</text><text x="432.5" y="449.2" font-size="13" fill="#000" text-anchor="start">Délka v mm</text><text x="586" y="449.2" font-size="13" fill="#000" text-anchor="start">Decimal</text><text x="160.5" y="471.2" font-size="13" fill="#000" text-anchor="end">178</text><text x="172" y="471.2" font-size="13" fill="#000" text-anchor="start">Délka</text><text x="325.5" y="471.2" font-size="13" fill="#000" text-anchor="start">m</text><text x="586" y="471.2" font-size="13" fill="#000" text-anchor="start">Decimal</text><text x="160.5" y="493.2" font-size="13" fill="#000" text-anchor="end">48</text><text x="172" y="493.2" font-size="13" fill="#000" text-anchor="start">Délka osy</text><text x="325.5" y="493.2" font-size="13" fill="#000" text-anchor="start">mm</text><text x="432.5" y="493.2" font-size="13" fill="#000" text-anchor="start">Dékla osy v mm</text><text x="586" y="493.2" font-size="13" fill="#000" text-anchor="start">Decimal</text><text x="160.5" y="515.2" font-size="13" fill="#000" text-anchor="end">175</text><text x="172" y="515.2" font-size="13" fill="#000" text-anchor="start">Design</text><text x="586" y="515.2" font-size="13" fill="#000" text-anchor="start">String</text><text x="160.5" y="537.2" font-size="13" fill="#000" text-anchor="end">103</text><text x="172" y="537.2" font-size="13" fill="#000" text-anchor="start">Displej</text><text x="586" y="537.2" font-size="13" fill="#000" text-anchor="start">String</text><text x="160.5" y="559.2" font-size="13" fill="#000" text-anchor="end">51</text><text x="172" y="559.2" font-size="13" fill="#000" text-anchor="start">Dodavatel</text><text x="586" y="559.2" font-size="13" fill="#000" text-anchor="start">Field</text><text x="160.5" y="581.2" font-size="13" fill="#000" text-anchor="end">37</text><text x="172" y="581.2" font-size="13" fill="#000" text-anchor="start">Dolní ložiska</text><text x="432.5" y="581.2" font-size="13" fill="#000" text-anchor="start">ložiska</text><text x="586" y="581.2" font-size="13" fill="#000" text-anchor="start">String</text><text x="160.5" y="603.2" font-size="13" fill="#000" text-anchor="end">34</text><text x="172" y="603.2" font-size="13" fill="#000" text-anchor="start">Dolní miska - materiál</text><text x="432.5" y="603.2" font-size="13" fill="#000" text-anchor="start">Ložiska</text><text x="586" y="603.2" font-size="13" fill="#000" text-anchor="start">String</text><text x="160.5" y="625.2" font-size="13" fill="#000" text-anchor="end">111</text><text x="172" y="625.2" font-size="13" fill="#000" text-anchor="start">Druh kola</text><text x="586" y="625.2" font-size="13" fill="#000" text-anchor="start">String</text><text x="160.5" y="647.2" font-size="13" fill="#000" text-anchor="end">89</text><text x="172" y="647.2" font-size="13" fill="#000" text-anchor="start">EPG</text><text x="586" y="647.2" font-size="13" fill="#000" text-anchor="start">String</text><text x="160.5" y="669.2" font-size="13" fill="#000" text-anchor="end">71</text><text x="172" y="669.2" font-size="13" fill="#000" text-anchor="start">Filtr proti usazeninám</text><text x="586" y="669.2" font-size="13" fill="#000" text-anchor="start">String</text><text x="160.5" y="691.2" font-size="13" fill="#000" text-anchor="end">75</text><text x="172" y="691.2" font-size="13" fill="#000" text-anchor="start">Formát LCD</text><text x="586" y="691.2" font-size="13" fill="#000" text-anchor="start">String</text><text x="160" y="734.6" font-size="12" fill="#2060b0" text-anchor="middle">0</text><text x="176.8" y="734.6" font-size="11.8" fill="#2060b0" text-anchor="start" letter-spacing="-0.1">Počet záznamů</text><text x="706" y="59" font-size="19.5" fill="#fff" text-anchor="start" letter-spacing="0.35">Automatické</text><text x="820.8" y="59" font-size="19.5" fill="#fff" text-anchor="start" letter-spacing="-1.1">...</text><text x="707" y="91.5" font-size="13" fill="#fff" text-anchor="start" font-weight="bold">Základní informace</text><text x="710" y="116.7" font-size="12.3" fill="#3446a8" text-anchor="start" letter-spacing="-0.2">Popis</text><text x="858" y="116.7" font-size="12.3" fill="#000" text-anchor="end">Automatické vypnutí</text><text x="710" y="139" font-size="12.5" fill="#2858a8" text-anchor="start">Změnil:</text><text x="857.5" y="139" font-size="12" fill="#2858a8" text-anchor="end" letter-spacing="-0.6">00.00.0000</text><text x="858" y="161" font-size="12" fill="#b0b0c8" text-anchor="end">[...</text><text x="707.6" y="690" font-size="13" fill="#fff" text-anchor="start" font-weight="bold">Nastavení</text><text x="717" y="714.7" font-size="11.3" fill="#3446a8" text-anchor="start">Jazyk pro zobrazení a e...</text><text x="713.6" y="734.3" font-size="13" fill="#000" text-anchor="start">implicitní</text></svg>
</body></html>
